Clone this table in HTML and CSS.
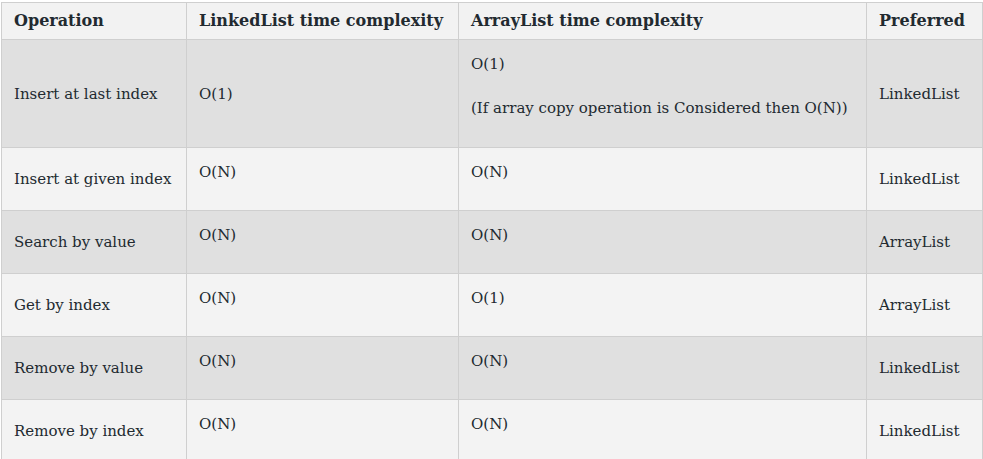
FILE: index.html
```html
<!DOCTYPE html>
<html lang="en">
<head>
<meta charset="utf-8">
<title>LinkedList vs ArrayList</title>
<link rel="stylesheet" href="styles.css">
</head>
<body>
<table class="cmp">
  <colgroup>
    <col class="c1">
    <col class="c2">
    <col class="c3">
    <col class="c4">
  </colgroup>
  <thead>
    <tr>
      <th>Operation</th>
      <th>LinkedList time complexity</th>
      <th>ArrayList time complexity</th>
      <th>Preferred</th>
    </tr>
  </thead>
  <tbody>
    <tr>
      <td>Insert at last index</td>
      <td>O(1)</td>
      <td><p>O(1)</p><p>(If array copy operation is Considered then O(N))</p></td>
      <td>LinkedList</td>
    </tr>
    <tr>
      <td>Insert at given index</td>
      <td><p>O(N)</p></td>
      <td><p>O(N)</p></td>
      <td>LinkedList</td>
    </tr>
    <tr>
      <td>Search by value</td>
      <td><p>O(N)</p></td>
      <td><p>O(N)</p></td>
      <td>ArrayList</td>
    </tr>
    <tr>
      <td>Get by index</td>
      <td><p>O(N)</p></td>
      <td><p>O(1)</p></td>
      <td>ArrayList</td>
    </tr>
    <tr>
      <td>Remove by value</td>
      <td><p>O(N)</p></td>
      <td><p>O(N)</p></td>
      <td>LinkedList</td>
    </tr>
    <tr>
      <td>Remove by index</td>
      <td><p>O(N)</p></td>
      <td><p>O(N)</p></td>
      <td>LinkedList</td>
    </tr>
  </tbody>
</table>
</body>
</html>
```
FILE: styles.css
```css
html, body {
  margin: 0;
  padding: 0;
  background: #ffffff;
}

body {
  padding: 2px 0 0 1px;
  font-family: "DejaVu Serif", "Liberation Serif", serif;
  font-size: 15px;
  color: #222a30;
}

.cmp {
  border-collapse: collapse;
  table-layout: fixed;
  width: 981px;
}

.c1 { width: 185px; }
.c2 { width: 272px; }
.c3 { width: 408px; }
.c4 { width: 116px; }

.cmp th,
.cmp td {
  border: 1px solid #cfcfcf;
  text-align: left;
  vertical-align: middle;
}

.cmp th {
  background: #f2f2f2;
  font-weight: bold;
  font-size: 16px;
  line-height: 24px;
  padding: 6px 12px;
}

.cmp td {
  line-height: 30px;
  padding: 9px 12px;
}

.cmp td p {
  margin: 0 0 14px;
}

.cmp td p + p {
  margin-bottom: 15px;
}

.cmp tbody tr:nth-child(odd) td {
  background: #e0e0e0;
}

.cmp tbody tr:nth-child(even) td {
  background: #f3f3f3;
}
```
